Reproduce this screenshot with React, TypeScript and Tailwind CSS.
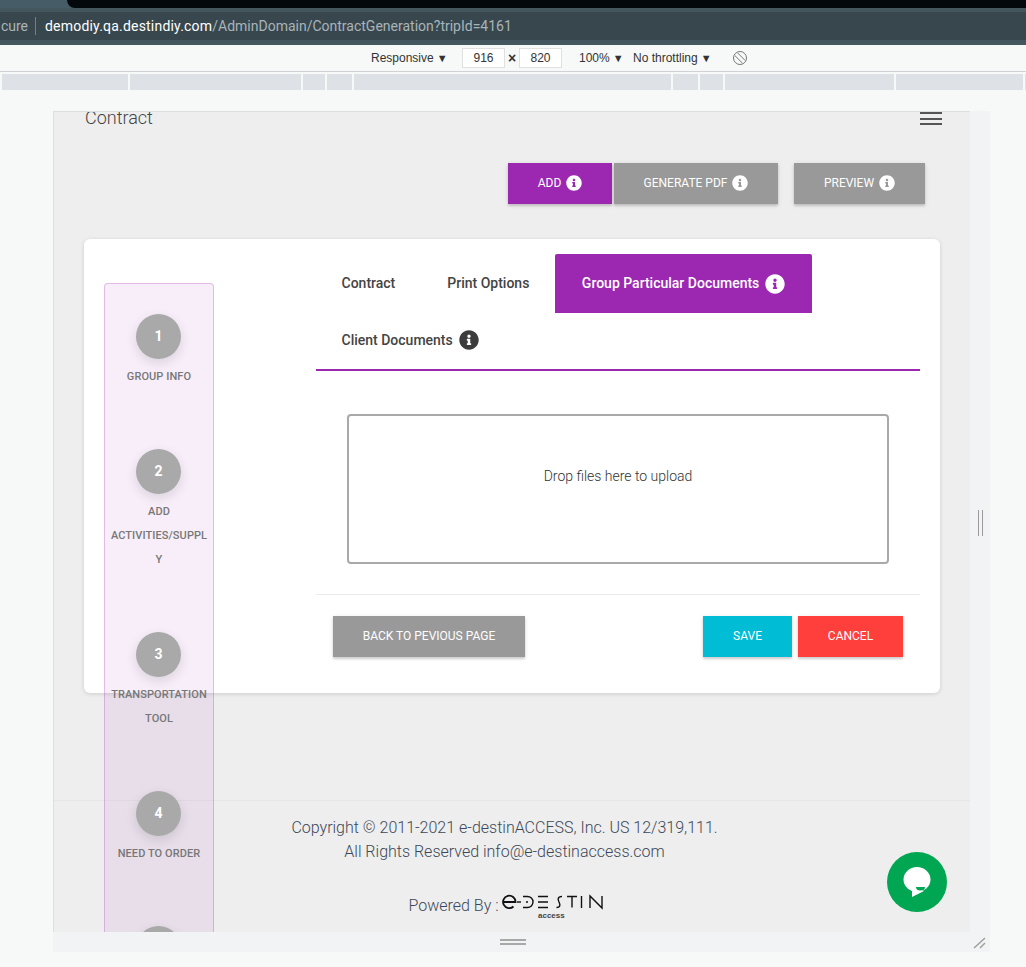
import { FaInfoCircle } from "react-icons/fa";

const rulerSegments = [
  [2, 126], [130, 171], [303, 22], [327, 25], [354, 317], [673, 25], [700, 23], [725, 169], [896, 127], [1025, 1],
];

const steps = [
  { n: 1, lines: "GROUP INFO" },
  { n: 2, lines: "ADD ACTIVITIES/SUPPLY" },
  { n: 3, lines: "TRANSPORTATION TOOL" },
  { n: 4, lines: "NEED TO ORDER" },
  { n: 5, lines: "" },
];

function ActionButton({ label, color, width, info }: { label: string; color: string; width: string; info?: boolean }) {
  return (
    <button className={`${color} ${width} h-[41px] flex items-center justify-center gap-[5px] text-white text-[12px] font-normal shadow-[0_2px_2px_rgba(0,0,0,0.14),0_1px_5px_rgba(0,0,0,0.1)]`}>
      <span className="pb-[2px]">{label}</span>
      {info && <FaInfoCircle className="text-[16px] mb-[2px]" />}
    </button>
  );
}

function Caret() {
  return <span className="text-[11px] ml-[3px]">▼</span>;
}

function Logo() {
  return (
    <svg width="102" height="26" viewBox="0 0 102 26" fill="none" stroke="#111" strokeWidth="1.400" className="block">
      <path d="M1.500 8h12a6.200 6.200 0 1 0-2 4.500" strokeWidth="1.800" />
      <path d="M15 8h4" />
      <path d="M21 2.500h4.500a5.500 5.500 0 0 1 0 11H21M24 8h2" />
      <path d="M36 2.500h10M36 8h10M36 13.500h10" />
      <path d="M60 2.500C55 2.500 56 6 57 8S59 13.500 54.500 13.500" />
      <path d="M65 2.500h10M70 2.500v11" />
      <path d="M79.500 2v12" />
      <path d="M88 14V2l12 12V2" />
      <text x="36" y="24" fontFamily="'Liberation Sans', sans-serif" fontSize="8" fontWeight="600" fill="#444" stroke="none">access</text>
    </svg>
  );
}

export default function App() {
  return (
    <div className="w-[1026px] h-[967px] overflow-hidden bg-[#f7f9f9] font-['Roboto',sans-serif]">
      {/* Browser chrome */}
      <div className="flex h-[8px] bg-[#465c67]">
        <div className="w-[67px]" />
        <div className="flex-1 bg-[#03080c] rounded-bl-[8px]" />
      </div>
      <div className="h-[37px] bg-[#38474e] border-t-[4px] border-b-[5px] border-t-[#44575f] border-b-[#44575f] flex items-center text-[14px] whitespace-nowrap overflow-hidden">
        <span className="w-[35px] text-right pr-[7px] text-[#a9b4b9]">cure</span>
        <span className="w-px h-[18px] bg-[#71808a]" />
        <span className="ml-[9px] text-white tracking-[0.2px]">demodiy.qa.destindiy.com</span>
        <span className="text-[#a9b4b9]">/AdminDomain/ContractGeneration?tripId=4161</span>
      </div>

      {/* Device toolbar */}
      <div className="h-[27px] flex items-center pl-[371px] text-[12px] text-[#333] font-['Liberation_Sans',sans-serif] border-b border-[#cfd1d3]">
        <span className="w-[91px] whitespace-nowrap">Responsive<Caret /></span>
        <span className="w-[43px] h-[20px] border border-[#e0e0e0] bg-white flex items-center justify-center">916</span>
        <span className="w-[14px] text-center text-[14px] font-bold">×</span>
        <span className="w-[43px] h-[20px] border border-[#e0e0e0] bg-white flex items-center justify-center">820</span>
        <span className="ml-[17px] w-[54px] whitespace-nowrap">100%<Caret /></span>
        <span className="w-[99px] whitespace-nowrap">No throttling<Caret /></span>
        <svg width="16" height="16" viewBox="0 0 16 16" fill="none" stroke="#777" strokeWidth="1">
          <circle cx="8" cy="8" r="6.500" />
          <path d="M2.800 5.500l7.700 7.700M5.500 2.800l7.700 7.700" />
        </svg>
      </div>

      {/* Ruler */}
      <div className="relative h-[16px] mt-[2px] flex">
        {rulerSegments.map(([x, w], i) => (
          <div
            key={i}
            className="bg-[#dee1e6] h-full shrink-0"
            style={{ width: w, marginLeft: i === 0 ? x : x - (rulerSegments[i - 1][0] + rulerSegments[i - 1][1]) }}
          />
        ))}
      </div>

      {/* Emulated device */}
      <div className="ml-[53px] mt-[21px] w-[937px]">
        <div className="flex">
          <div className="relative w-[917px] h-[821px] overflow-hidden bg-[#eeeeee] border-l border-t border-[#dedede]">
            <div className="absolute left-[31px] top-[-6px] text-[18px] font-light text-[#444] leading-[24px]">Contract</div>
            <div className="absolute left-[866px] top-[-1px] w-[22px] h-[14px] flex flex-col justify-between pt-[1px]">
              <span className="h-[2px] bg-[#555]" />
              <span className="h-[2px] bg-[#555]" />
              <span className="h-[2px] bg-[#555]" />
            </div>

            <div className="pt-[51px] pr-[45px] flex justify-end">
              <ActionButton label="ADD" color="bg-[#9c27b0]" width="w-[104px]" info />
              <div className="w-[2px]" />
              <ActionButton label="GENERATE PDF" color="bg-[#999999]" width="w-[164px]" info />
              <div className="w-[16px]" />
              <ActionButton label="PREVIEW" color="bg-[#999999]" width="w-[131px]" info />
            </div>

            {/* Card */}
            <div className="mt-[35px] ml-[30px] w-[856px] h-[454px] bg-white rounded-[6px] shadow-[0_1px_4px_rgba(0,0,0,0.14)] pt-[15px] pl-[232px] pr-[20px]">
              <div className="flex flex-wrap border-b-2 border-[#9c27b0] text-[14px] font-medium text-[#444]">
                <div className="h-[59px] pl-[25.5px] pr-[26px] flex items-center">Contract</div>
                <div className="h-[59px] px-[26px] flex items-center">Print Options</div>
                <div className="h-[59px] w-[257px] pl-[26.5px] bg-[#9c27b0] text-white rounded-t-[2px] flex items-center gap-[6px]">
                  Group Particular Documents
                  <FaInfoCircle className="text-[20px]" />
                </div>
                <div className="h-[56px] w-full pl-[25.5px] pb-[2px] flex items-center gap-[6px]">
                  Client Documents
                  <FaInfoCircle className="text-[20px] text-[#3c3c3c]" />
                </div>
              </div>

              <div className="mx-[31px] mt-[43px] h-[150px] border-2 border-[#a9a9a9] rounded-[4px] pt-[50px] text-center text-[14px] font-light text-[#333] leading-[20px]">
                Drop files here to upload
              </div>

              <div className="mt-[30px] border-t border-[#ececec]" />

              <div className="mt-[21px] px-[17px] flex">
                <ActionButton label="BACK TO PEVIOUS PAGE" color="bg-[#999999]" width="w-[192px]" />
                <div className="flex-1" />
                <ActionButton label="SAVE" color="bg-[#00bcd4]" width="w-[89px]" />
                <div className="w-[6px]" />
                <ActionButton label="CANCEL" color="bg-[#ff3f3c]" width="w-[105px]" />
              </div>
            </div>

            {/* Footer */}
            <div className="mt-[107px] border-t border-[#e6e6e6] pt-[15px] pr-[15px] text-center text-[16px] font-light text-[#3c4858] leading-[24px]">
              <div>Copyright © 2011-2021 e-destinACCESS, Inc. US 12/319,111.</div>
              <div>All Rights Reserved info@e-destinaccess.com</div>
              <div className="mt-[25px] pl-[3px] flex justify-center items-start">
                <span className="mt-[5px] mr-[3px]">Powered By :</span>
                <span className="mt-[5px]"><Logo /></span>
              </div>
            </div>

            {/* Step rail, overlapping the card */}
            <div className="absolute left-[50px] top-[171px] w-[110px] h-[700px] bg-[#9c27b0]/[0.08] border border-[#9c27b0]/25 rounded-t-[4px] pt-[30px] flex flex-col items-center">
              {steps.map((s) => (
                <div key={s.n} className="w-[100px] flex flex-col items-center mb-[60px]">
                  <div className="w-[45px] h-[45px] mr-[1px] rounded-full bg-[#a9a9a9] text-white text-[14px] font-bold flex items-center justify-center shadow-[0_4px_12px_rgba(0,0,0,0.12)]">
                    {s.n}
                  </div>
                  {s.lines && (
                    <div className="mt-[6px] w-full text-center text-[11px] font-medium text-[#777] leading-[24px] break-words tracking-[0.08px]">
                      {s.lines}
                    </div>
                  )}
                </div>
              ))}
            </div>

            {/* Chat launcher */}
            <div className="absolute left-[833px] top-[740px] w-[60px] h-[60px] rounded-full bg-[#00a651] flex items-center justify-center">
              <svg width="32" height="36" viewBox="0 0 32 36">
                <ellipse cx="16" cy="15.500" rx="13.500" ry="12.500" fill="#fff" />
                <path d="M11 25v8l12-6z" fill="#fff" />
                <path d="M15 23h9a4.500 3.500 0 0 1-9 0z" fill="#00a651" />
              </svg>
            </div>
          </div>

          {/* Right resize strip */}
          <div className="w-[20px] h-[821px] bg-[#f1f3f4] flex items-center justify-center gap-[3px] pt-[2px]">
            <span className="w-px h-[26px] bg-[#9a9a9a]" />
            <span className="w-px h-[26px] bg-[#9a9a9a]" />
          </div>
        </div>

        {/* Bottom resize strip */}
        <div className="relative h-[20px] bg-[#f1f3f4] flex flex-col items-center justify-center gap-[2px]">
          <span className="w-[26px] h-[2px] bg-[#a8a8a8] mr-[18px]" />
          <span className="w-[26px] h-[2px] bg-[#a8a8a8] mr-[18px]" />
          <svg width="14" height="12" viewBox="0 0 14 12" fill="none" stroke="#a0a0a0" strokeWidth="1.500" className="absolute right-[3px] top-[5px]">
            <path d="M1 11L12 1M7 11l5-5" />
          </svg>
        </div>
      </div>
    </div>
  );
}
